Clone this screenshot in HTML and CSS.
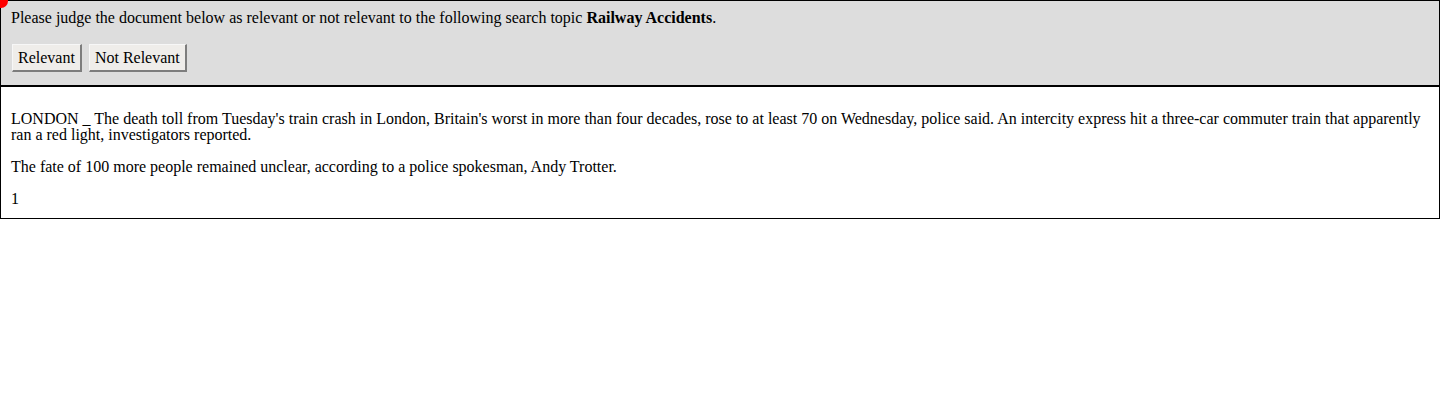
FILE: index.html
```html
<!DOCTYPE html>
<html>
<head>
<meta charset="utf-8">
<link rel="stylesheet" href="styles.css">
</head>
<body>
<div class="page">
  <span class="dot"></span>
  <div class="judge">
    <p class="prompt">Please judge the document below as relevant or not relevant to the following search topic <b>Railway Accidents</b>.</p>
    <div class="buttons">
      <button class="btn">Relevant</button>
      <button class="btn">Not Relevant</button>
    </div>
  </div>
  <div class="doc">
    <p>LONDON _ The death toll from Tuesday's train crash in London, Britain's worst in more than four decades, rose to at least 70 on Wednesday, police said. An intercity express hit a three-car commuter train that apparently ran a red light, investigators reported.</p>
    <p>The fate of 100 more people remained unclear, according to a police spokesman, Andy Trotter.</p>
    <div class="num">1</div>
  </div>
</div>
</body>
</html>
```

FILE: styles.css
```css
html, body {
  margin: 0;
  padding: 0;
  background: #fff;
}
body {
  font-family: "Liberation Serif", "Times New Roman", serif;
  font-size: 16px;
  color: #000;
}
.page {
  position: relative;
}
.dot {
  position: absolute;
  top: -6px;
  left: -6px;
  width: 14px;
  height: 14px;
  border-radius: 50%;
  background: #ff0000;
}
.judge {
  background: #dddddd;
  border: 1px solid #000;
  padding: 8px 10px 13px;
}
.prompt {
  margin: 0;
  line-height: 18px;
}
.buttons {
  display: flex;
  gap: 7px;
  margin-top: 17px;
  margin-left: 1px;
}
.btn {
  font-family: "Liberation Serif", "Times New Roman", serif;
  font-size: 16px;
  color: #000;
  height: 28px;
  padding: 0 5px;
  margin: 0;
  background: #efedea;
  border-style: solid;
  border-width: 1px 2px 2px 1px;
  border-color: #f7f7f7 #7d7d7d #7d7d7d #f7f7f7;
  box-shadow: inset 0 0 0 1px #efedea;
}
.doc {
  border: 1px solid #000;
  padding: 8px 10px 11px;
  line-height: 16px;
}
.doc p {
  margin: 16px 0;
}
.num {
  margin: 0;
}
```
